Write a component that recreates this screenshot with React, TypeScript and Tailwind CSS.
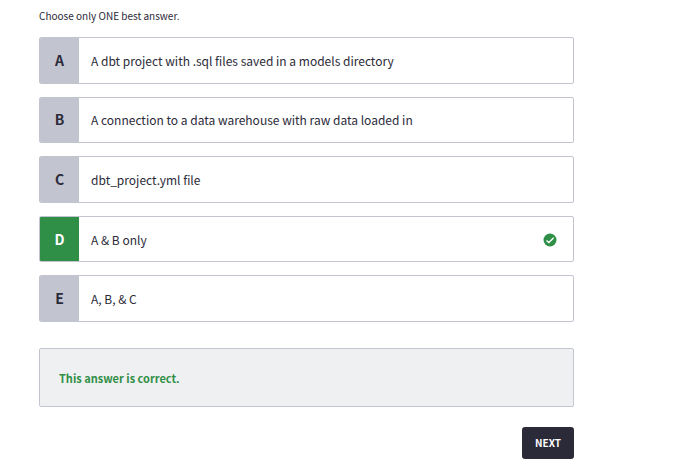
import { useState } from "react";

const options = [
  { id: "A", text: "A dbt project with .sql files saved in a models directory" },
  { id: "B", text: "A connection to a data warehouse with raw data loaded in" },
  { id: "C", text: "dbt_project.yml file" },
  { id: "D", text: "A & B only" },
  { id: "E", text: "A, B, & C" },
];

const correctId = "D";

function CheckIcon() {
  return (
    <svg viewBox="0 0 14 14" className="size-[14px] shrink-0" aria-hidden="true">
      <circle cx="7" cy="7" r="6.5" fill="#2f8f46" />
      <path d="M3.5 7.4 5.9 9.6 10.6 4.7" fill="none" stroke="#fff" strokeWidth="1.4" />
    </svg>
  );
}

export default function App() {
  const [selected, setSelected] = useState(correctId);

  return (
    <main className="bg-white pt-2 pr-[101px] pl-[39px] font-['Noto_Sans_CJK_SC',sans-serif] text-[12px] text-[#2b2a38]">
      <fieldset>
        <legend className="text-[10px] leading-4">Choose only ONE best answer.</legend>
        <div className="mt-[13px] grid min-h-[285px] auto-rows-fr gap-[13px]">
          {options.map(({ id, text }) => {
            const marked = selected === id && id === correctId;
            return (
              <label
                key={id}
                className="relative flex cursor-pointer overflow-hidden rounded-xs border border-[#c2c4d0] bg-white"
              >
                <input
                  type="radio"
                  name="answer"
                  value={id}
                  checked={selected === id}
                  onChange={() => setSelected(id)}
                  className="sr-only"
                />
                <span
                  className={`flex w-[39px] shrink-0 items-center justify-center text-[14px] font-bold ${
                    marked ? "bg-[#2f8f46] text-white" : "bg-[#c2c4d0]"
                  }`}
                >
                  {id}
                </span>
                <span className="flex flex-1 items-center justify-between pt-px pr-4 pl-3">
                  {text}
                  {marked && <CheckIcon />}
                </span>
              </label>
            );
          })}
        </div>
      </fieldset>
      <p
        role="status"
        className="mt-[26px] rounded-xs border border-[#c2c4d0] bg-[#eff0f2] px-[19px] pt-[19px] pb-[18px] text-[11px] leading-5 font-bold text-[#2f8f46]"
      >
        This answer is correct.
      </p>
      <div className="mt-5 flex justify-end">
        <button
          type="button"
          className="h-8 cursor-pointer rounded-[3px] bg-[#2b2a38] px-[13px] pb-[2px] text-[10px] font-bold text-white"
        >
          NEXT
        </button>
      </div>
    </main>
  );
}
